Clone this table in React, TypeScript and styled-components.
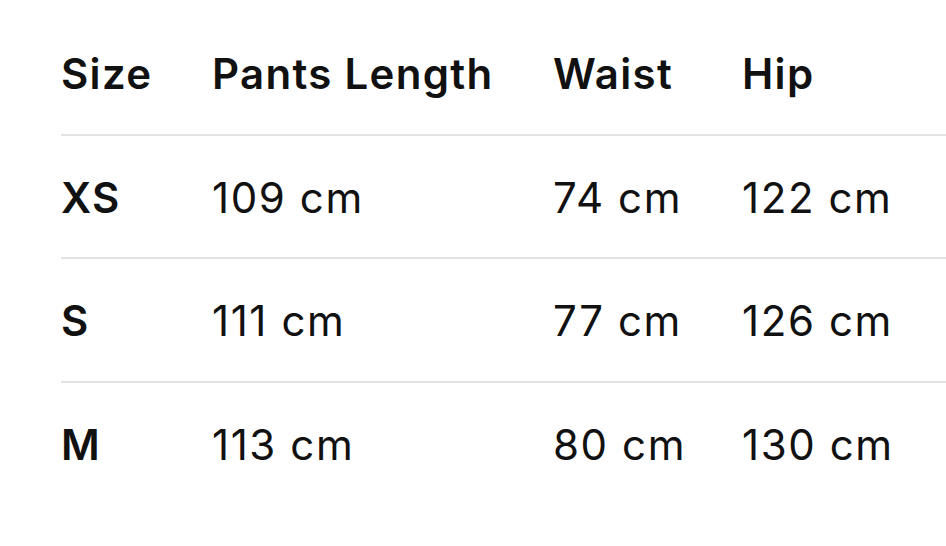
import React from "react";
import styled, { createGlobalStyle } from "styled-components";

const GlobalStyle = createGlobalStyle`
  html, body {
    margin: 0;
    padding: 0;
    background: #ffffff;
    overflow: hidden;
  }
  body {
    font-family: Inter, "Noto Sans", "Liberation Sans", sans-serif;
    color: #111111;
    -webkit-font-smoothing: antialiased;
  }
`;

const rows = [
  { size: "XS", length: "109 cm", waist: "74 cm", hip: "122 cm" },
  { size: "S", length: "111 cm", waist: "77 cm", hip: "126 cm" },
  { size: "M", length: "113 cm", waist: "80 cm", hip: "130 cm" },
];

const SizeChart: React.FC = () => {
  return (
    <Table>
      <Row $head>
        <Cell $bold>Size</Cell>
        <Cell $bold>Pants Length</Cell>
        <Cell $bold>Waist</Cell>
        <Cell $bold>Hip</Cell>
      </Row>
      {rows.map((r, i) => (
        <Row key={r.size} $last={i === rows.length - 1}>
          <Cell $bold>{r.size}</Cell>
          <Cell>{r.length}</Cell>
          <Cell>{r.waist}</Cell>
          <Cell>{r.hip}</Cell>
        </Row>
      ))}
    </Table>
  );
};

export default function App() {
  return (
    <>
      <GlobalStyle />
      <SizeChart />
    </>
  );
}

const Table = styled.div`
  width: 946px;
  height: 546px;
  padding-left: 61px;
  box-sizing: border-box;
`;

const Row = styled.div<{ $head?: boolean; $last?: boolean }>`
  display: grid;
  grid-template-columns: 151px 341px 189px 1fr;
  align-items: start;
  padding-top: ${(p) => (p.$head ? "52.7px" : "40.7px")};
  padding-bottom: ${(p) => (p.$head ? "39.3px" : "38.8px")};
  border-bottom: ${(p) => (p.$last ? "none" : "2px solid #e3e3e3")};
`;

const Cell = styled.div<{ $bold?: boolean }>`
  font-size: 42px;
  line-height: 42px;
  font-weight: ${(p) => (p.$bold ? 600 : 400)};
  letter-spacing: ${(p) => (p.$bold ? "1.3px" : "1.6px")};
  white-space: nowrap;
`;
